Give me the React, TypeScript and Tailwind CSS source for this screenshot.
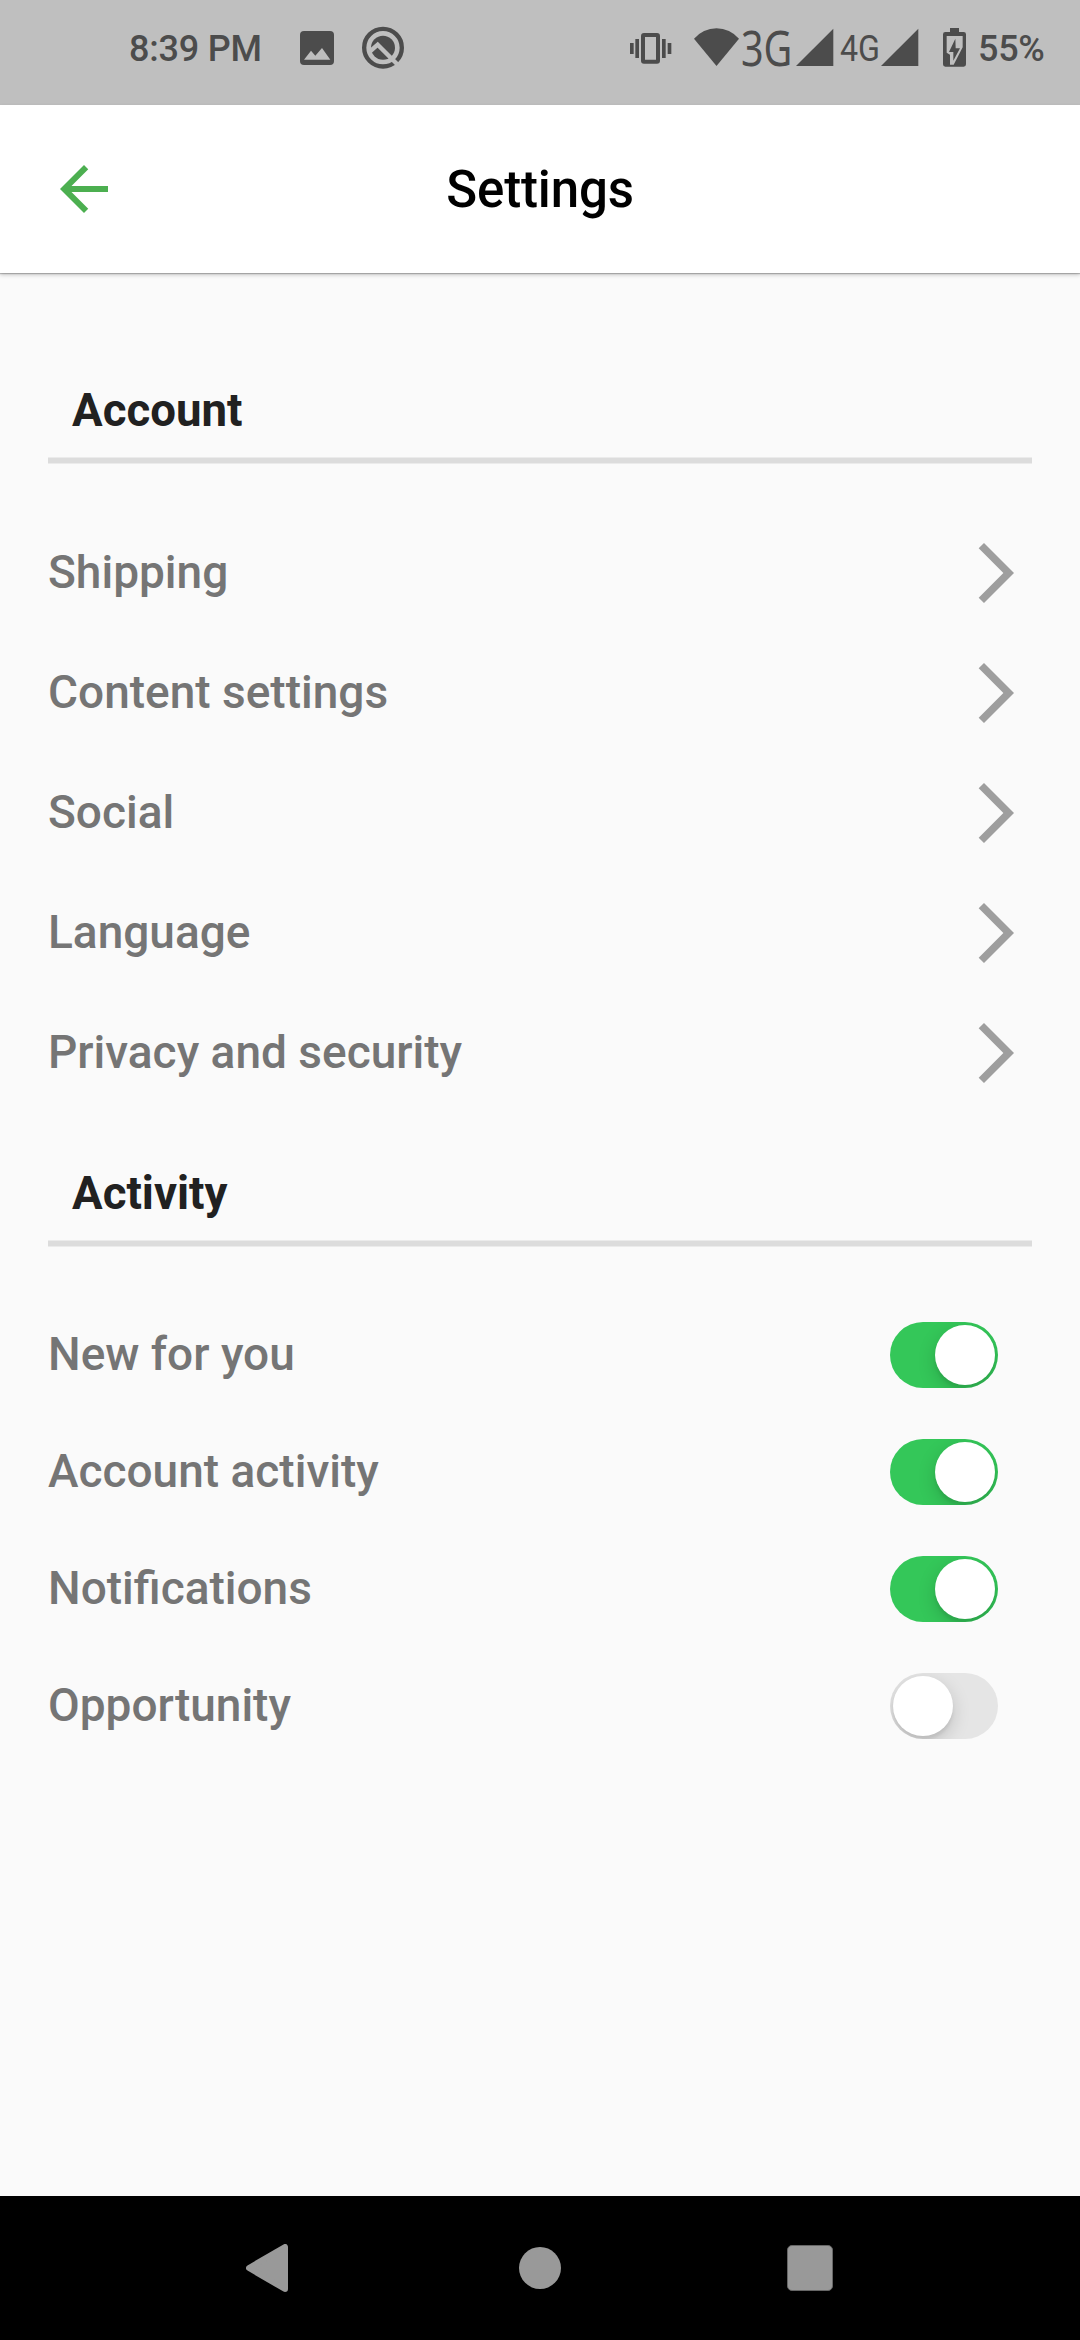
import type { ReactNode } from "react";

const accountItems = ["Shipping", "Content settings", "Social", "Language", "Privacy and security"];

const activityItems = [
  { label: "New for you", on: true },
  { label: "Account activity", on: true },
  { label: "Notifications", on: true },
  { label: "Opportunity", on: false },
];

function Signal({ className }: { className: string }) {
  return (
    <svg className={className} viewBox="0 0 114 315" fill="currentColor">
      <path d="M0 198H112V86z" />
    </svg>
  );
}

function StatusBar() {
  return (
    <div className="flex h-[105px] shrink-0 items-start bg-[#bfbfbf] pl-[129px] text-[36px] font-medium leading-[99px] text-[#4c4c4c]">
      <span className="w-[171px] shrink-0 whitespace-nowrap tracking-[-0.2px]">8:39 PM</span>
      <svg className="h-[105px] w-[34px] shrink-0" viewBox="570 0 102 315">
        <rect x="570" y="93" width="102" height="102" rx="12" fill="#4c4c4c" />
        <path d="M582 179L603 152L616 167L636 144L661 179z" fill="#bfbfbf" />
      </svg>
      <svg className="ml-[28px] h-[105px] w-[42px] shrink-0" viewBox="756 0 126 315" fill="none">
        <circle cx="819" cy="143" r="56.5" stroke="#4c4c4c" strokeWidth="13" />
        <circle cx="819" cy="143" r="36" fill="#4c4c4c" />
        <path d="M778 156L803 134L864 195" stroke="#bfbfbf" strokeWidth="13" />
      </svg>
      <svg className="ml-[226px] h-[105px] w-[42px] shrink-0" viewBox="60 0 126 315" fill="#4c4c4c">
        <rect x="99" y="105" width="45" height="80" rx="3" fill="none" stroke="#4c4c4c" strokeWidth="12" />
        <path d="M60 129h11v33H60zM76 117h11v57H76zM156 117h11v57h-11zM173 129h11v33h-11z" />
      </svg>
      <svg className="ml-[22px] h-[105px] w-[45px] shrink-0" viewBox="252 0 135 315" fill="#4c4c4c">
        <path d="M252 116A88 88 0 0 1 387 116L319.5 198z" />
      </svg>
      <div className="h-[105px] w-[57px] shrink-0">
        <span className="ml-[1.5px] block w-fit origin-left scale-x-[0.79] font-['Noto_Sans'] text-[50px] font-normal leading-[95px]">
          3G
        </span>
      </div>
      <Signal className="h-[105px] w-[38px] shrink-0" />
      <div className="h-[105px] w-[47px] shrink-0">
        <span className="ml-[5.5px] block w-fit origin-left scale-x-[0.87] text-[37px] font-normal leading-[97px]">
          4G
        </span>
      </div>
      <Signal className="h-[105px] w-[38px] shrink-0" />
      <svg className="ml-[24px] h-[105px] w-[23px] shrink-0" viewBox="309 0 69 315" fill="#4c4c4c">
        <path d="M330 84H357V96H371Q378 96 378 103V193Q378 200 371 200H316Q309 200 309 193V103Q309 96 316 96H330z" />
        <path d="M320 108H368V142L341 194H330V164L320 158z" fill="#bfbfbf" />
        <path d="M346 116L327 156H340V182L360 145H347z" />
      </svg>
      <span className="ml-[12px] tracking-[-0.3px]">55%</span>
    </div>
  );
}

function AppBar() {
  return (
    <header className="relative z-10 grid h-[168px] shrink-0 grid-cols-[1fr_auto_1fr] items-start bg-white shadow-[0_1px_1px_rgba(0,0,0,0.22),0_2px_4px_rgba(0,0,0,0.2)]">
      <svg className="ml-[48px] mt-[48px] size-[72px]" viewBox="0 0 24 24" fill="#4caf50">
        <path d="M20 11H7.83l5.59-5.59L12 4l-8 8 8 8 1.41-1.41L7.83 13H20v-2z" />
      </svg>
      <h1 className="text-[51px] font-medium leading-[169px] tracking-[-0.15px] text-black">Settings</h1>
    </header>
  );
}

function SectionTitle({ children }: { children: ReactNode }) {
  return (
    <>
      <h2 className="pl-[24px] text-[45.6px] font-bold leading-[53px] text-[#212121]">{children}</h2>
      <div className="mt-5 mb-[49px] h-[7px] border-y border-[#ebebeb] bg-[#dcdcdc]" />
    </>
  );
}

function Toggle({ on }: { on: boolean }) {
  return (
    <span
      className={`mr-[34px] mt-[26px] flex h-[66px] w-[108px] overflow-hidden rounded-full p-[3px] ${
        on ? "justify-end bg-[#34c759]" : "justify-start bg-[#e5e5e5]"
      }`}
    >
      <span className="size-[60px] rounded-full bg-white shadow-[0_6px_18px_rgba(0,0,0,0.17),0_4px_3px_rgba(0,0,0,0.06)]" />
    </span>
  );
}

function NavBar() {
  return (
    <nav className="flex h-[144px] shrink-0 items-center bg-black pl-[246px]">
      <svg className="h-[48px] w-[42px]" viewBox="0 0 42 48">
        <path d="M3 24L39 3V45z" fill="#999" stroke="#999" strokeWidth="6" strokeLinejoin="round" />
      </svg>
      <span className="ml-[231px] size-[42px] rounded-full bg-[#999]" />
      <span className="ml-[226px] size-[46px] rounded-[5px] border border-[#666] bg-[#999]" />
    </nav>
  );
}

export default function App() {
  return (
    <div className="flex h-[2340px] w-[1080px] flex-col overflow-hidden bg-[#fafafa] font-[Roboto,sans-serif]">
      <StatusBar />
      <AppBar />
      <main className="flex-1 px-[48px] pt-[111px]">
        <SectionTitle>Account</SectionTitle>
        <ul className="mb-[54px]">
          {accountItems.map((label) => (
            <li key={label} className="flex h-[120px] items-start justify-between">
              <span className="text-[46px] font-medium leading-[118px] text-[#757575]">{label}</span>
              <svg className="mt-[24px] size-[72px]" viewBox="0 0 24 24" fill="#9e9e9e">
                <path d="M6.23 20.23L8 22l10-10L8 2 6.23 3.77 14.46 12z" />
              </svg>
            </li>
          ))}
        </ul>
        <SectionTitle>Activity</SectionTitle>
        <ul>
          {activityItems.map(({ label, on }) => (
            <li key={label} className="flex h-[117px] items-start justify-between">
              <span className="text-[46px] font-medium leading-[116px] text-[#757575]">{label}</span>
              <Toggle on={on} />
            </li>
          ))}
        </ul>
      </main>
      <NavBar />
    </div>
  );
}
